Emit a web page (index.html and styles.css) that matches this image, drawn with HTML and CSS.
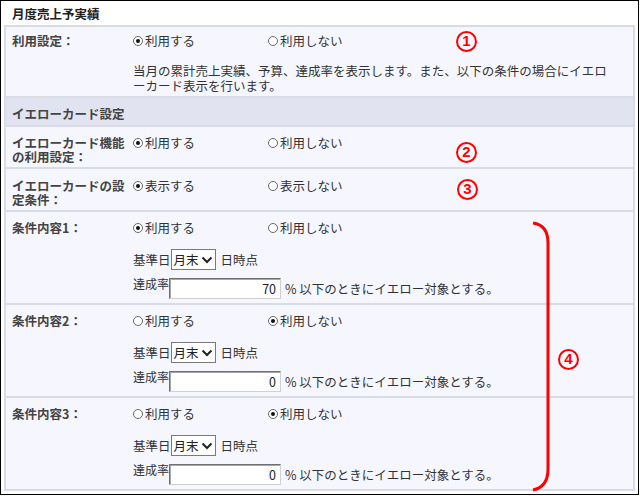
FILE: index.html
```html
<!DOCTYPE html>
<html lang="ja">
<head>
<meta charset="utf-8">
<title>月度売上予実績</title>
<link rel="stylesheet" href="styles.css">
</head>
<body>
<div class="frame">
  <div class="title">月度売上予実績</div>
  <div class="tbl">
    <div class="row r1">
      <div class="lbl">利用設定：</div>
      <div class="val">
        <div class="radios"><span class="opt"><span class="radio on"></span>利用する</span><span class="opt"><span class="radio"></span>利用しない</span></div>
        <p class="desc">当月の累計売上実績、予算、達成率を表示します。また、以下の条件の場合にイエローカード表示を行います。</p>
      </div>
    </div>
    <div class="hdr">イエローカード設定</div>
    <div class="row r2">
      <div class="lbl">イエローカード機能の利用設定：</div>
      <div class="val">
        <div class="radios"><span class="opt"><span class="radio on"></span>利用する</span><span class="opt"><span class="radio"></span>利用しない</span></div>
      </div>
    </div>
    <div class="row r3">
      <div class="lbl">イエローカードの設定条件：</div>
      <div class="val">
        <div class="radios"><span class="opt"><span class="radio on"></span>表示する</span><span class="opt"><span class="radio"></span>表示しない</span></div>
      </div>
    </div>
    <div class="row cond">
      <div class="lbl">条件内容1：</div>
      <div class="val">
        <div class="radios"><span class="opt"><span class="radio on"></span>利用する</span><span class="opt"><span class="radio"></span>利用しない</span></div>
        <div class="line base">基準日<span class="sel">月末<svg class="chev" width="12" height="8" viewBox="0 0 12 8"><polyline points="1.5,1.5 6,6 10.5,1.5" fill="none" stroke="#222" stroke-width="2"/></svg></span><span class="after">日時点</span></div>
        <div class="line rate"><span class="rl">達成率</span><input class="num" type="text" value="70" readonly><span class="after">% 以下のときにイエロー対象とする。</span></div>
      </div>
    </div>
    <div class="row cond">
      <div class="lbl">条件内容2：</div>
      <div class="val">
        <div class="radios"><span class="opt"><span class="radio"></span>利用する</span><span class="opt"><span class="radio on"></span>利用しない</span></div>
        <div class="line base">基準日<span class="sel">月末<svg class="chev" width="12" height="8" viewBox="0 0 12 8"><polyline points="1.5,1.5 6,6 10.5,1.5" fill="none" stroke="#222" stroke-width="2"/></svg></span><span class="after">日時点</span></div>
        <div class="line rate"><span class="rl">達成率</span><input class="num" type="text" value="0" readonly><span class="after">% 以下のときにイエロー対象とする。</span></div>
      </div>
    </div>
    <div class="row cond">
      <div class="lbl">条件内容3：</div>
      <div class="val">
        <div class="radios"><span class="opt"><span class="radio"></span>利用する</span><span class="opt"><span class="radio on"></span>利用しない</span></div>
        <div class="line base">基準日<span class="sel">月末<svg class="chev" width="12" height="8" viewBox="0 0 12 8"><polyline points="1.5,1.5 6,6 10.5,1.5" fill="none" stroke="#222" stroke-width="2"/></svg></span><span class="after">日時点</span></div>
        <div class="line rate"><span class="rl">達成率</span><input class="num" type="text" value="0" readonly><span class="after">% 以下のときにイエロー対象とする。</span></div>
      </div>
    </div>
  </div>
  <span class="mark m1">1</span>
  <span class="mark m2">2</span>
  <span class="mark m3">3</span>
  <span class="mark m4">4</span>
  <svg class="bracket" width="30" height="272" viewBox="0 0 30 272"><path d="M2 2 Q17 4 17 22 L17 248 Q17 266 2 269" fill="none" stroke="#ff0000" stroke-width="3"/></svg>
</div>
</body>
</html>
```

FILE: styles.css
```css
html, body {
  margin: 0;
  padding: 0;
  background: #fff;
}
body {
  font-family: "Noto Sans CJK JP", "Noto Sans", sans-serif;
  font-size: 12.5px;
  color: #333;
}
.frame {
  position: relative;
  width: 639px;
  height: 495px;
  box-sizing: border-box;
  border: 1px solid #000;
  background: #fff;
}
.title {
  height: 24px;
  line-height: 26px;
  padding-left: 11px;
  font-weight: bold;
  color: #222;
}
.tbl {
  margin-left: 3px;
  width: 631px;
  box-sizing: border-box;
  border: 2px solid #d9dbe5;
  border-bottom: 0;
  background: #f5f6fe;
}
.row {
  display: grid;
  grid-template-columns: 127px 1fr;
  border-bottom: 2px solid #d9dbe5;
}
.lbl {
  padding: 9px 6px 3px 6px;
  line-height: 14px;
  font-weight: bold;
  color: #444;
}
.val {
  padding: 9px 0 4px 0;
}
.r1 .lbl, .r1 .val { padding-top: 7px; }
.r1 .val { padding-bottom: 3px; }
.r3 .lbl, .r3 .val { padding-top: 10px; }
.radios {
  display: flex;
  line-height: 14px;
  height: 14px;
}
.opt {
  display: inline-flex;
  align-items: center;
}
.opt:first-child { width: 135px; }
.radio {
  width: 10px;
  height: 10px;
  box-sizing: border-box;
  border: 1px solid #6a6a6a;
  border-radius: 50%;
  background: #fff;
  margin-right: 2px;
  position: relative;
}
.radio.on::after {
  content: "";
  position: absolute;
  left: 2px;
  top: 2px;
  width: 4px;
  height: 4px;
  border-radius: 50%;
  background: #111;
}
.desc {
  margin: 15px 0 0 0;
  width: 479px;
  line-height: 15px;
}
.hdr {
  background: #e1e4f0;
  padding: 8px 6px 3px 6px;
  line-height: 16px;
  font-weight: bold;
  color: #444;
  border-bottom: 2px solid #d9dbe5;
}
.line {
  display: flex;
  align-items: center;
  height: 21px;
}
.base { margin-top: 14px; }
.rate { margin-top: 8px; }
.sel {
  display: inline-flex;
  align-items: center;
  width: 45px;
  height: 21px;
  box-sizing: border-box;
  border: 1px solid #7a7a7a;
  background: #fff;
  padding-left: 2px;
  color: #222;
}
.chev { margin-left: 2px; }
.after { margin-left: 5px; }
.rate .after { margin-left: 4px; }
.rl {
  align-self: flex-start;
  line-height: 12px;
  font-size: 12px;
}
.num {
  width: 112px;
  height: 21px;
  box-sizing: border-box;
  margin: 0;
  border: 1px solid;
  border-color: #6f6f6f #d0d0d0 #d0d0d0 #6f6f6f;
  box-shadow: inset 1px 1px 0 #a8a8a8;
  background: #fff;
  text-align: right;
  padding: 0 4px 0 0;
  font-family: inherit;
  font-size: 12.5px;
  color: #222;
  outline: none;
}
.mark {
  position: absolute;
  width: 21px;
  height: 21px;
  box-sizing: border-box;
  border: 2.5px solid #ff0000;
  border-radius: 50%;
  color: #ff0000;
  font-family: "Liberation Sans", sans-serif;
  font-weight: bold;
  font-size: 15px;
  line-height: 16px;
  text-align: center;
}
.m1 { left: 455px; top: 30px; }
.m2 { left: 455px; top: 141px; }
.m3 { left: 456px; top: 178px; }
.m4 { left: 557px; top: 348px; }
.bracket {
  position: absolute;
  left: 530px;
  top: 220px;
}
```
